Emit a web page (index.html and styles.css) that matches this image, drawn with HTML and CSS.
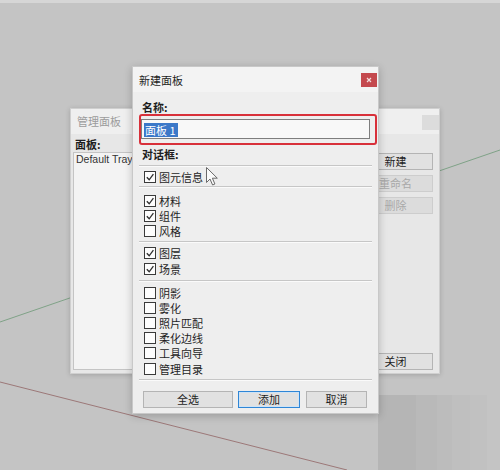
FILE: index.html
```html
<!DOCTYPE html>
<html lang="zh-CN">
<head>
<meta charset="utf-8">
<title>新建面板</title>
<link rel="stylesheet" href="styles.css">
</head>
<body>
<div class="desk">
  <div class="topstrip"></div>
  <svg class="axes" width="500" height="470" viewBox="0 0 500 470">
    <line x1="0" y1="322" x2="500" y2="150" stroke="#7fa287" stroke-width="1"/>
    <line x1="0" y1="382" x2="347" y2="470" stroke="#9c7878" stroke-width="1"/>
  </svg>
  <div class="stripes"></div>

  <div class="win back">
    <div class="tb back-tb">
      <span class="ttl dim">管理面板</span>
      <span class="tbbtn"></span>
    </div>
    <div class="back-body">
      <div class="lbl bold">面板:</div>
      <div class="back-grid">
        <div class="listbox"><span class="tray">Default Tray</span></div>
        <div class="side">
          <div class="btn">新建</div>
          <div class="btn dis">重命名</div>
          <div class="btn dis">删除</div>
          <div class="btn last">关闭</div>
        </div>
      </div>
    </div>
  </div>

  <div class="win front">
    <div class="tb front-tb">
      <span class="ttl">新建面板</span>
      <span class="close"><svg width="6" height="6" viewBox="0 0 6 6"><path d="M1 1L5 5M5 1L1 5" stroke="#f4dede" stroke-width="1.2"/></svg></span>
    </div>
    <div class="front-body">
      <div class="lbl bold">名称:</div>
      <div class="redbox">
        <div class="input"><span class="sel">面板 1</span></div>
      </div>
      <div class="lbl bold">对话框:</div>
      <div class="sep"></div>
      <div class="group g1">
        <div class="row"><span class="cb on"><svg viewBox="0 0 10 10"><path d="M1.8 5.2L4.2 7.8L8.4 2.2"/></svg></span>图元信息</div>
      </div>
      <div class="sep"></div>
      <div class="group g2">
        <div class="row"><span class="cb on"><svg viewBox="0 0 10 10"><path d="M1.8 5.2L4.2 7.8L8.4 2.2"/></svg></span>材料</div>
        <div class="row"><span class="cb on"><svg viewBox="0 0 10 10"><path d="M1.8 5.2L4.2 7.8L8.4 2.2"/></svg></span>组件</div>
        <div class="row"><span class="cb"></span>风格</div>
      </div>
      <div class="sep"></div>
      <div class="group g3">
        <div class="row"><span class="cb on"><svg viewBox="0 0 10 10"><path d="M1.8 5.2L4.2 7.8L8.4 2.2"/></svg></span>图层</div>
        <div class="row"><span class="cb on"><svg viewBox="0 0 10 10"><path d="M1.8 5.2L4.2 7.8L8.4 2.2"/></svg></span>场景</div>
      </div>
      <div class="sep"></div>
      <div class="group g4">
        <div class="row"><span class="cb"></span>阴影</div>
        <div class="row"><span class="cb"></span>雾化</div>
        <div class="row"><span class="cb"></span>照片匹配</div>
        <div class="row"><span class="cb"></span>柔化边线</div>
        <div class="row"><span class="cb"></span>工具向导</div>
        <div class="row"><span class="cb"></span>管理目录</div>
      </div>
      <div class="sep"></div>
      <div class="actions">
        <div class="btn w-all">全选</div>
        <div class="btn w-add default">添加</div>
        <div class="btn w-cancel">取消</div>
      </div>
    </div>
  </div>

  <svg class="cursor" width="13" height="20" viewBox="0 0 13 20">
    <path d="M0.5 0.5L0.5 15.5L4 12L6.6 18L8.9 17L6.4 11.2L11.3 11.2Z" fill="#fafafa" stroke="#6a6a6a" stroke-width="1" stroke-linejoin="round"/>
  </svg>
</div>
</body>
</html>
```

FILE: styles.css
```css
* { box-sizing: border-box; }
html, body { margin: 0; padding: 0; }
body {
  background: #c4c4c4;
  font-family: "Noto Sans CJK SC", "Noto Sans", sans-serif;
  font-size: 11px;
  color: #1e1e1e;
}
.desk {
  position: relative;
  width: 500px;
  height: 470px;
  overflow: hidden;
  background: #c4c4c4;
}
.topstrip {
  height: 3px;
  background: #d6d6d6;
}
.axes {
  position: absolute;
  left: 0;
  top: 0;
}
.stripes {
  position: absolute;
  left: 378px;
  top: 395px;
  width: 122px;
  height: 75px;
  background: linear-gradient(to right,
    #b5b5b5 0 38px, #b9b9b9 38px 59px, #bcbcbc 59px 74px,
    #bfbfbf 74px 92px, #c1c1c1 92px 109px, #c4c4c4 109px);
}

/* windows */
.win {
  position: absolute;
  display: flex;
  flex-direction: column;
  border: 1px solid #cfcfcf;
  box-shadow: 0 1px 5px rgba(0,0,0,0.18);
}
.tb {
  display: flex;
  align-items: center;
  flex: none;
}
.ttl { line-height: 14px; }
.dim { color: #9c9c9c; }
.bold { font-weight: bold; }
.lbl { line-height: 16px; height: 16px; }

/* back window */
.back {
  left: 70px;
  top: 108px;
  width: 370px;
  height: 266px;
  background: #e7e7e7;
}
.back-tb {
  height: 25px;
  padding-left: 6px;
  background: #efefef;
  align-items: flex-start;
}
.back-tb .ttl { margin-top: 5px; }
.tbbtn {
  margin-left: auto;
  margin-top: 6px;
  width: 17px;
  height: 15px;
  background: #dcdcdc;
}
.back-body {
  flex: 1;
  display: flex;
  flex-direction: column;
  padding: 2px 6px 3px 2px;
}
.back-body .lbl { padding-left: 2px; }
.back-grid {
  flex: 1;
  display: grid;
  grid-template-columns: 1fr 75px;
  column-gap: 8px;
}
.listbox {
  background: #f3f3f3;
  border: 1px solid #c4c4c4;
  padding: 0 2px;
  font-family: "Liberation Sans", Arial, sans-serif;
  font-size: 10.5px;
  line-height: 13px;
  color: #333;
}
.side {
  display: flex;
  flex-direction: column;
  gap: 5px;
  padding-top: 1px;
}
.side .last { margin-top: auto; }
.btn {
  height: 17px;
  display: flex;
  align-items: center;
  justify-content: center;
  background: #e1e1e1;
  border: 1px solid #b4b4b4;
  line-height: 15px;
  color: #1e1e1e;
  flex: none;
}
.btn.dis { color: #a8a8a8; background: #dcdcdc; border-color: #cdcdcd; }

/* front dialog */
.front {
  left: 132px;
  top: 66px;
  width: 247px;
  height: 348px;
  background: #eeeeee;
  border-color: #c8c8c8;
  box-shadow: 0 2px 8px rgba(0,0,0,0.22);
}
.front-tb {
  height: 25px;
  padding-left: 6px;
  padding-right: 1px;
  background: #f3f3f3;
}
.close {
  margin-left: auto;
  width: 16px;
  height: 14px;
  background: #c4494e;
  display: flex;
  align-items: center;
  justify-content: center;
}
.front-body {
  flex: 1;
  display: flex;
  flex-direction: column;
  padding: 7px 6px 0 6px;
}
.front-body .lbl { padding-left: 3px; }
.redbox {
  margin-top: -1px;
  margin-right: -5px;
  border: 2px solid #d8303a;
  border-radius: 3px;
  padding: 3px 5px 4px 0;
}
.input {
  height: 20px;
  background: #f8f8f8;
  border: 1px solid #7e7e7e;
  padding: 2px 0 0 2px;
}
.sel {
  display: inline-block;
  background: #3b78c8;
  color: #fff;
  line-height: 14px;
  padding: 0 2px 0 1px;
}
.front-body .redbox + .lbl { margin-top: 1px; }
.sep {
  height: 2px;
  margin-top: 3px;
  border-top: 1px solid #c6c6c6;
  border-bottom: 1px solid #fafafa;
  flex: none;
}
.group {
  padding-left: 5px;
  flex: none;
}
.group + .sep { margin-top: 0; }
.g1 { padding-top: 2px; padding-bottom: 2px; }
.g2 { padding-top: 5px; padding-bottom: 2px; }
.g3 { padding-top: 3px; padding-bottom: 4px; }
.g4 { padding-top: 3px; padding-bottom: 3px; }
.row {
  height: 15.2px;
  display: flex;
  align-items: center;
  line-height: 14px;
}
.cb {
  width: 12px;
  height: 12px;
  border: 1px solid #3a3a3a;
  background: #fdfdfd;
  margin-right: 3px;
  flex: none;
  display: flex;
  align-items: center;
  justify-content: center;
}
.cb svg {
  width: 10px;
  height: 10px;
  fill: none;
  stroke: #2e2e2e;
  stroke-width: 1.3;
}
.actions {
  display: flex;
  margin-top: 10px;
  padding-left: 4px;
  flex: none;
}
.w-all { width: 90px; }
.w-add { width: 62px; margin-left: 5px; }
.w-cancel { width: 61px; margin-left: 6px; }
.btn.default {
  border-color: #2f86d6;
  box-shadow: inset 0 0 0 1px #cfe3f5;
}
.cursor {
  position: absolute;
  left: 206px;
  top: 167px;
}
```
